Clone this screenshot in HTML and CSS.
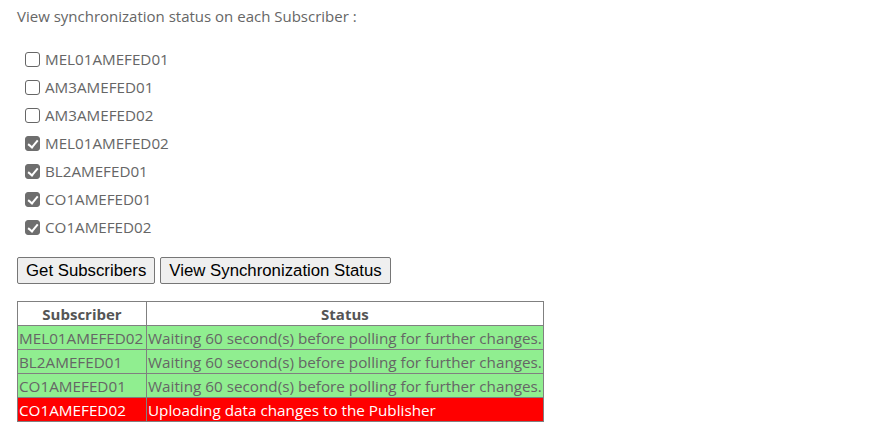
FILE: index.html
```html
<!DOCTYPE html>
<html>
<head>
<meta charset="utf-8">
<link rel="stylesheet" href="styles.css">
</head>
<body>
<div class="page">
  <p class="intro">View synchronization status on each Subscriber :</p>
  <ul class="subs">
    <li><label><input type="checkbox"><span>MEL01AMEFED01</span></label></li>
    <li><label><input type="checkbox"><span>AM3AMEFED01</span></label></li>
    <li><label><input type="checkbox"><span>AM3AMEFED02</span></label></li>
    <li><label><input type="checkbox" checked><span>MEL01AMEFED02</span></label></li>
    <li><label><input type="checkbox" checked><span>BL2AMEFED01</span></label></li>
    <li><label><input type="checkbox" checked><span>CO1AMEFED01</span></label></li>
    <li><label><input type="checkbox" checked><span>CO1AMEFED02</span></label></li>
  </ul>
  <div class="actions">
    <button class="btn">Get Subscribers</button>
    <button class="btn">View Synchronization Status</button>
  </div>
  <table class="status">
    <thead>
      <tr><th class="c1">Subscriber</th><th>Status</th></tr>
    </thead>
    <tbody>
      <tr class="ok"><td>MEL01AMEFED02</td><td>Waiting 60 second(s) before polling for further changes.</td></tr>
      <tr class="ok"><td>BL2AMEFED01</td><td>Waiting 60 second(s) before polling for further changes.</td></tr>
      <tr class="ok"><td>CO1AMEFED01</td><td>Waiting 60 second(s) before polling for further changes.</td></tr>
      <tr class="busy"><td>CO1AMEFED02</td><td>Uploading data changes to the Publisher</td></tr>
    </tbody>
  </table>
</div>
</body>
</html>
```
FILE: styles.css
```css
html, body {
  margin: 0;
  padding: 0;
  background: #fff;
}
.page {
  padding: 6px 17px 0 17px;
  font-family: "Open Sans", "Noto Sans", sans-serif;
  font-size: 15px;
  color: #666;
}
.intro {
  margin: 0;
  line-height: 20px;
}
.subs {
  list-style: none;
  margin: 19px 0 0 0;
  padding: 0 0 0 8px;
}
.subs li {
  height: 28px;
  display: flex;
  align-items: center;
}
.subs label {
  display: flex;
  align-items: center;
  gap: 5px;
  font-size: 15.2px;
}
.subs input {
  appearance: none;
  -webkit-appearance: none;
  margin: 0;
  width: 15px;
  height: 15px;
  border: 1px solid #666;
  border-radius: 3px;
  background: #fff;
  box-sizing: border-box;
  position: relative;
}
.subs input:checked {
  background: #6e6e6e;
  border-color: #6e6e6e;
}
.subs input:checked::after {
  content: "";
  position: absolute;
  left: 4px;
  top: 1px;
  width: 4px;
  height: 8px;
  border: solid #fff;
  border-width: 0 2.5px 2.5px 0;
  transform: rotate(40deg);
}
.actions {
  display: flex;
  gap: 5px;
  margin-top: 16px;
}
.btn {
  font-family: "Liberation Sans", Arial, sans-serif;
  font-size: 16.8px;
  color: #000;
  background: #efefef;
  border: 1px solid #767676;
  border-radius: 2px;
  height: 27px;
  padding: 0 8px;
  margin: 0;
}
.status {
  border-collapse: collapse;
  margin-top: 17px;
  font-size: 15.25px;
}
.status th, .status td {
  border: 1px solid #808080;
  padding: 0 1px;
  height: 23px;
  line-height: 22px;
  text-align: left;
  white-space: nowrap;
}
.status th {
  text-align: center;
  font-weight: bold;
  font-size: 15px;
  color: #555;
}
.status .c1 {
  width: 126px;
}
.ok td {
  background: #90ee90;
  color: #666;
}
.busy td {
  background: #ff0000;
  color: #fff;
}
```
